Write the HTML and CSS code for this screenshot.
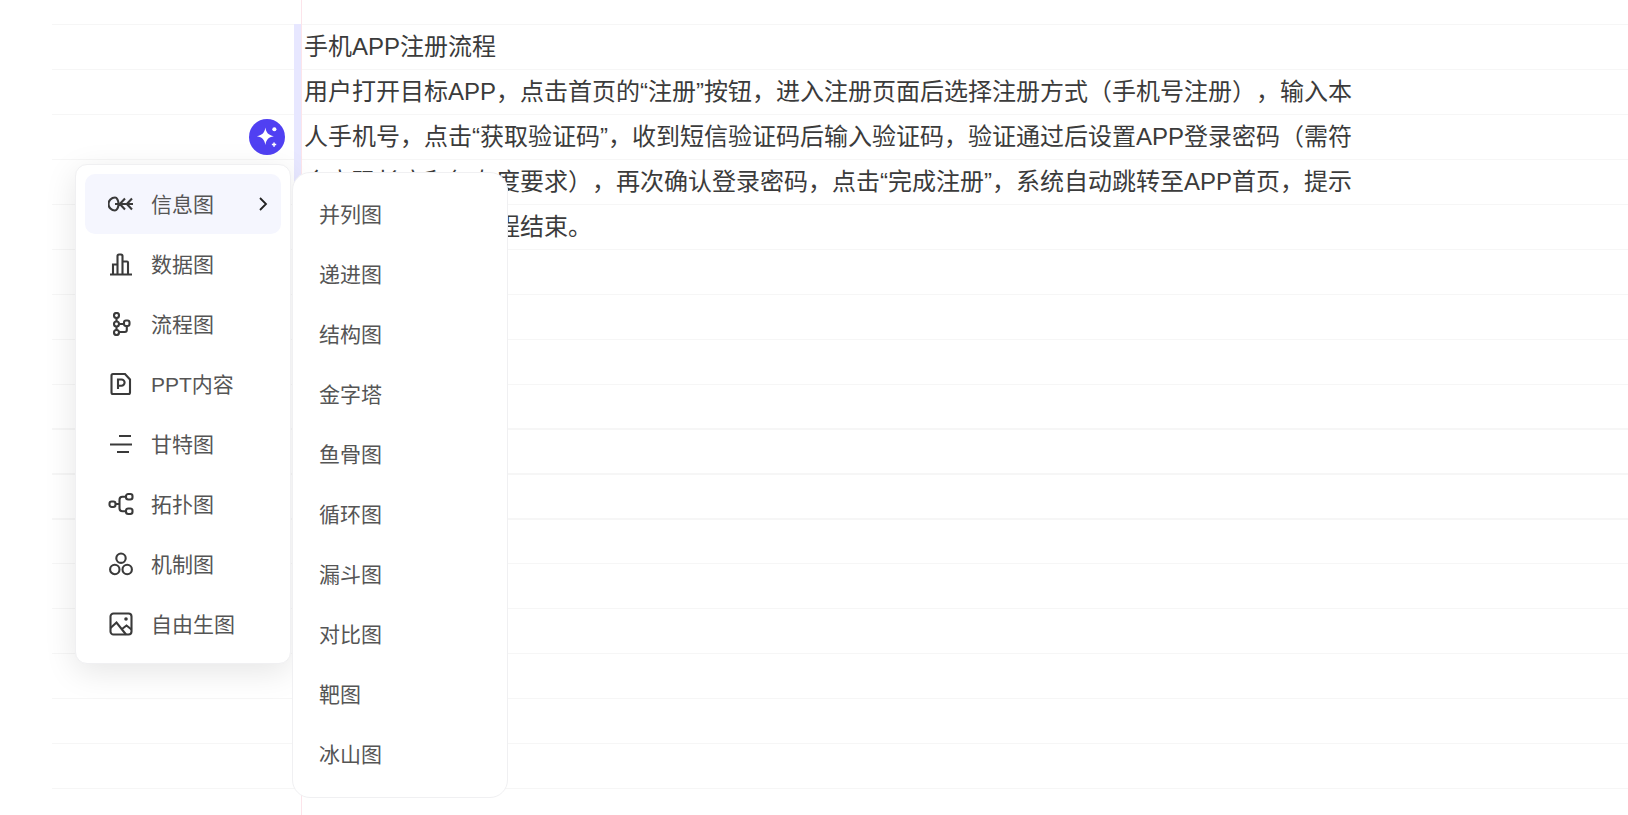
FILE: index.html
```html
<!DOCTYPE html>
<html lang="zh-CN">
<head>
  <meta charset="UTF-8">
  <title>手机APP注册流程</title>
  <link rel="stylesheet" href="styles.css">
</head>
<body>
  <!-- Ruled sheet with the note text -->
  <main class="sheet">
    <div class="margin-line"></div>
    <div class="select-band"></div>
    <div class="note">
      <p>手机APP注册流程</p>
      <p>用户打开目标APP，点击首页的“注册”按钮，进入注册页面后选择注册方式（手机号注册），输入本人手机号，点击“获取验证码”，收到短信验证码后输入验证码，验证通过后设置APP登录密码（需符合密码长度和复杂度要求），再次确认登录密码，点击“完成注册”，系统自动跳转至APP首页，提示注册成功，注册流程结束。</p>
    </div>
  </main>

  <button class="magic-btn" aria-label="AI">
    <svg viewBox="0 0 24 24" width="26" height="26">
      <path class="fill-white" d="M10.5 3.2c.9 5 2.6 6.9 7.8 8-5.200 1.100-6.900 3-7.800 8.100-.9-5.100-2.600-7-7.800-8.100 5.200-1.100 6.900-3 7.800-8z"/>
      <circle class="fill-white" cx="18.800" cy="4.800" r="1.900"/>
      <path class="plus" d="M18.500 17v4M16.500 19h4"/>
    </svg>
  </button>

  <!-- Main menu -->
  <nav class="menu">
    <a class="menu-item active">
      <svg class="icon" viewBox="0 0 26 24"><path d="M7 5.500a6.500 6.500 0 1 0 0 13 3.500 6.500 0 0 0 0-13zM7 12h18M17 6.500 11.800 12l5.200 5.500M24 6.500 18.800 12l5.200 5.500"/></svg>
      <span>信息图</span>
      <svg class="chevron" viewBox="0 0 10 16"><path d="m2 2 6 6-6 6"/></svg>
    </a>
    <a class="menu-item">
      <svg class="icon" viewBox="0 0 26 24"><path d="M2 22.500h22M5 22V12.500h4.500V22M9.500 22V4a1.500 1.500 0 0 1 1.500-1.500h2A1.500 1.500 0 0 1 14.500 4v18M14.500 22V9.500H19a1 1 0 0 1 1 1V22"/></svg>
      <span>数据图</span>
    </a>
    <a class="menu-item">
      <svg class="icon" viewBox="0 0 26 24"><circle cx="8.500" cy="3.500" r="2.500"/><circle cx="8.500" cy="20.500" r="2.500"/><circle cx="8.500" cy="12" r="2.500"/><rect x="16" y="8.500" width="5.500" height="5.500" rx="2"/><path d="M8.500 6v3.500M8.500 14.500V18M11 12h5M18.800 14v4a2 2 0 0 1-2 2H11"/></svg>
      <span>流程图</span>
    </a>
    <a class="menu-item">
      <svg class="icon" viewBox="0 0 26 24"><path d="M3.500 3.500A1.500 1.500 0 0 1 5 2h12l5 5.500v13a1.500 1.500 0 0 1-1.500 1.500H5a1.500 1.500 0 0 1-1.500-1.500zM10 17V7.500h3.500a3 3 0 0 1 0 6.200H10"/></svg>
      <span>PPT内容</span>
    </a>
    <a class="menu-item">
      <svg class="icon" viewBox="0 0 26 24"><path d="M11 4h12M2 12.500h22M9 20h12"/></svg>
      <span>甘特图</span>
    </a>
    <a class="menu-item">
      <svg class="icon" viewBox="0 0 26 24"><rect x="1.500" y="9.500" width="6" height="5.500" rx="2.200"/><rect x="18" y="2" width="6.500" height="5.500" rx="2.200"/><rect x="18" y="16.500" width="6.500" height="5.500" rx="2.200"/><path d="M7.500 12h3M18 4.800h-3.500a3 3 0 0 0-3 3v8.400a3 3 0 0 0 3 3H18"/></svg>
      <span>拓扑图</span>
    </a>
    <a class="menu-item">
      <svg class="icon" viewBox="0 0 26 24"><circle cx="13" cy="6.200" r="4.700"/><circle cx="6.800" cy="17.500" r="4.700"/><circle cx="19.200" cy="17.500" r="4.700"/></svg>
      <span>机制图</span>
    </a>
    <a class="menu-item">
      <svg class="icon" viewBox="0 0 26 24"><rect x="2.500" y="1.500" width="21" height="21" rx="3"/><path d="m2.500 16 6-5.500 9.500 12M14 17l4.500-3.500 5 4"/><circle class="fill-dark" cx="18" cy="7" r="1.800"/></svg>
      <span>自由生图</span>
    </a>
  </nav>

  <!-- Sub menu -->
  <ul class="submenu">
    <li>并列图</li>
    <li>递进图</li>
    <li>结构图</li>
    <li>金字塔</li>
    <li>鱼骨图</li>
    <li>循环图</li>
    <li>漏斗图</li>
    <li>对比图</li>
    <li>靶图</li>
    <li>冰山图</li>
  </ul>
</body>
</html>
```

FILE: styles.css
```css
html, body {
  margin: 0;
  height: 100%;
  overflow: hidden;
  background-color: #fff;
  font-family: "Liberation Sans", "Noto Sans CJK SC", sans-serif;
  text-spacing-trim: space-all;
}
.sheet {
  position: relative;
  height: 815px;
  margin-left: 52px;
  padding-left: 252px;
  box-sizing: border-box;
  background-image: repeating-linear-gradient(to bottom, #f6f6f6 0, #f6f6f6 1.200px, transparent 1.200px, transparent 44.940px);
  background-position: 0 24px;
  background-repeat: no-repeat;
}
.margin-line {
  position: absolute;
  left: 249px;
  top: 0;
  bottom: 0;
  width: 1px;
  background-color: #fce4ea;
}
.select-band {
  position: absolute;
  left: 242px;
  top: 24px;
  width: 7px;
  height: 225px;
  background-color: #e7e7ff;
}
.note {
  position: relative;
  width: 1050px;
  padding-top: 25px;
  font-size: 24px;
  line-height: 44.940px;
  color: #3b3b3b;
}
.note p {
  margin: 0;
}

.magic-btn {
  position: absolute;
  left: 249px;
  top: 119px;
  display: flex;
  align-items: center;
  justify-content: center;
  width: 36px;
  height: 36px;
  padding: 0;
  border: none;
  border-radius: 50%;
  background-color: #5040f2;
}
.fill-white {
  fill: #fff;
}
.plus {
  fill: none;
  stroke: #fff;
  stroke-width: 1.400;
}

.menu {
  position: absolute;
  left: 75px;
  top: 164px;
  width: 216px;
  height: 500px;
  padding: 9px;
  box-sizing: border-box;
  background-color: #fff;
  border: 1px solid #f0f0f2;
  border-radius: 12px;
  box-shadow: 0 8px 32px rgba(0, 0, 0, 0.1);
}
.menu-item {
  display: flex;
  align-items: center;
  height: 60px;
  padding-left: 23px;
  border-radius: 10px;
  font-size: 21px;
  color: #555;
}
.menu-item span {
  position: relative;
  top: -1px;
}
.menu-item.active {
  background-color: #f5f6fe;
}
.icon {
  flex: none;
  width: 26px;
  height: 24px;
  margin-right: 17px;
  fill: none;
  stroke: #3a3a3a;
  stroke-width: 2.100;
}
.icon .fill-dark {
  fill: #3a3a3a;
  stroke: none;
}
.chevron {
  width: 10px;
  height: 16px;
  margin-left: auto;
  margin-right: 13px;
  fill: none;
  stroke: #222;
  stroke-width: 1.800;
}

.submenu {
  position: absolute;
  left: 292px;
  top: 172px;
  width: 216px;
  height: 626px;
  margin: 0;
  padding: 12px 0;
  box-sizing: border-box;
  list-style: none;
  background-color: #fff;
  border: 1px solid #f0f0f2;
  border-radius: 18px;
}
.submenu li {
  height: 60px;
  padding-left: 26px;
  font-size: 21px;
  line-height: 60px;
  color: #555;
}
```
